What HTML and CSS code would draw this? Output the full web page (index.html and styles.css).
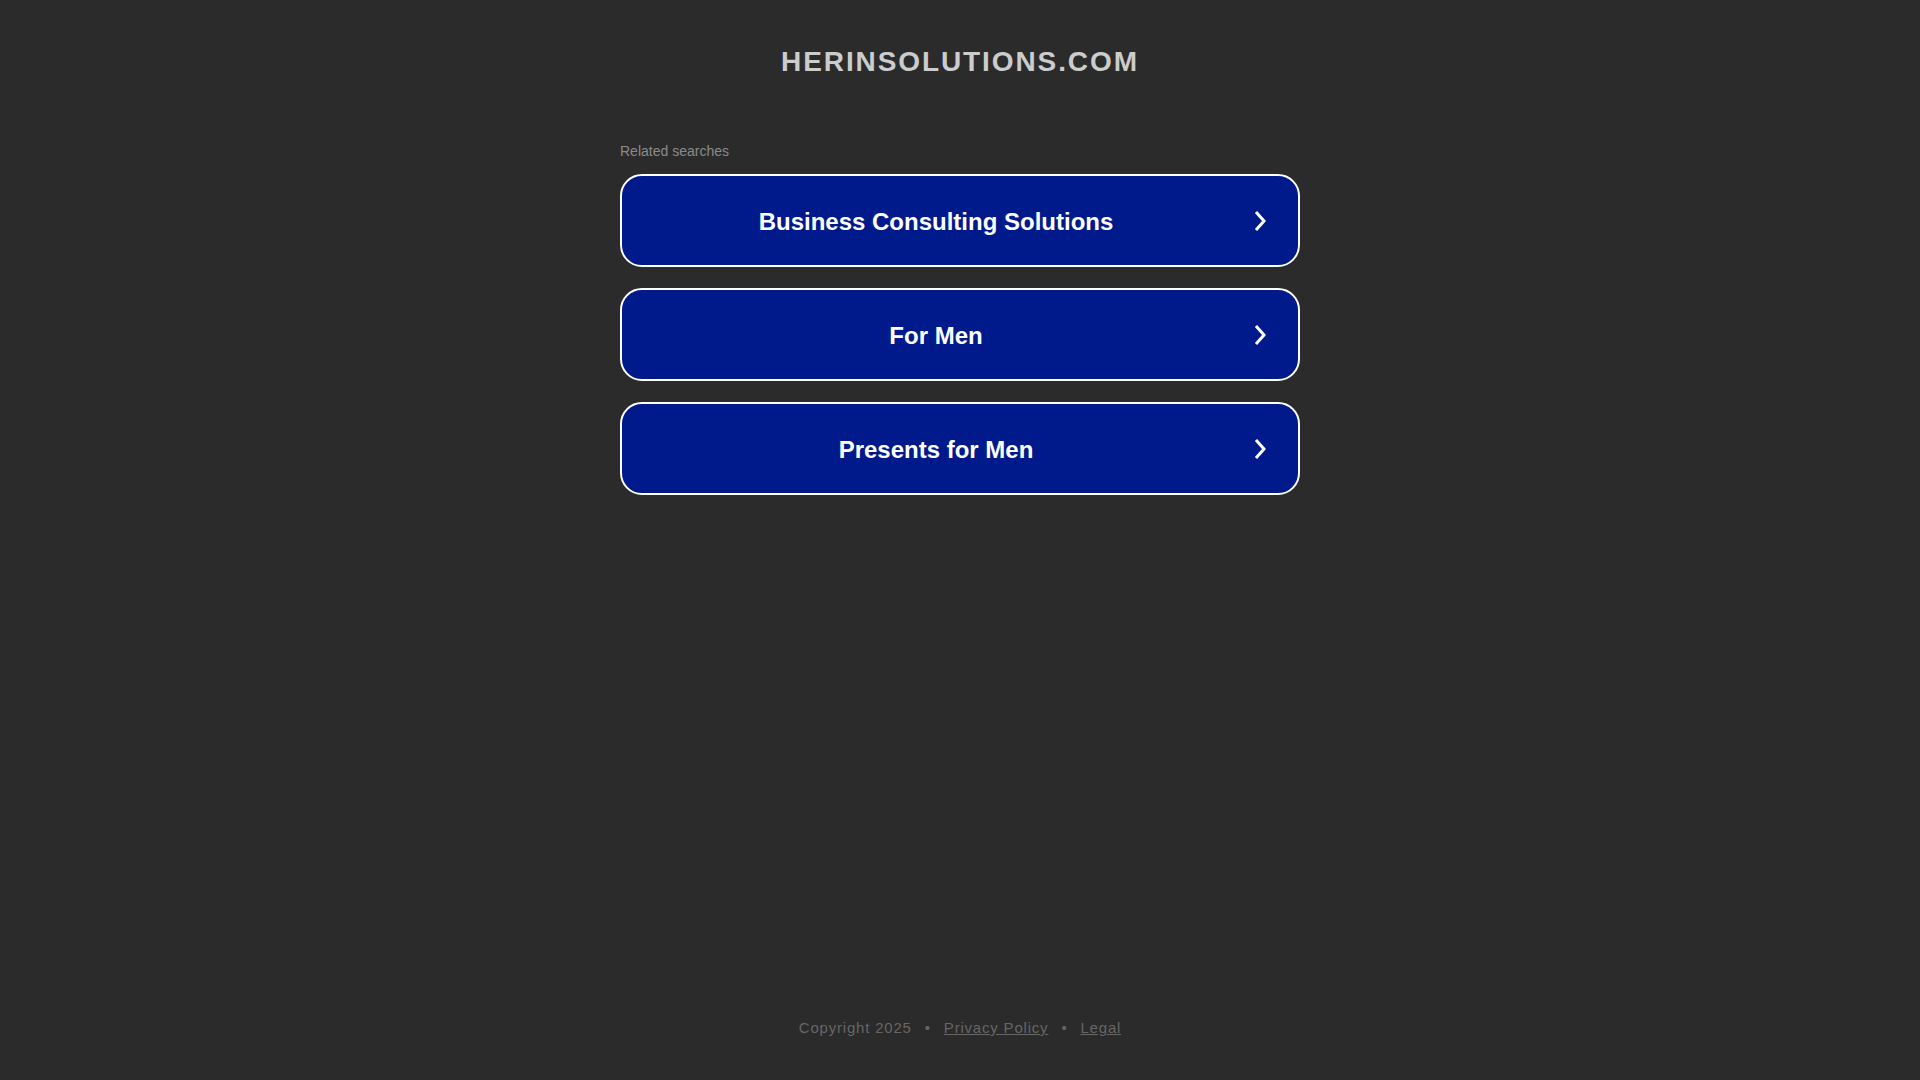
FILE: index.html
```html
<!DOCTYPE html>
<html lang="en">
<head>
<meta charset="utf-8">
<title>herinsolutions.com</title>
<link rel="stylesheet" href="styles.css">
</head>
<body>
<div class="page">
  <header class="header">
    <h1 class="domain">herinsolutions.com</h1>
  </header>
  <main class="content">
    <p class="related-title">Related searches</p>
    <ul class="ads">
      <li><a class="ad" href="#"><span class="ad-text">Business Consulting Solutions</span><svg class="chevron" viewBox="0 0 12 22" width="12" height="22"><polyline points="2,2 10,11 2,20" fill="none" stroke="#fff" stroke-width="3"/></svg></a></li>
      <li><a class="ad" href="#"><span class="ad-text">For Men</span><svg class="chevron" viewBox="0 0 12 22" width="12" height="22"><polyline points="2,2 10,11 2,20" fill="none" stroke="#fff" stroke-width="3"/></svg></a></li>
      <li><a class="ad" href="#"><span class="ad-text">Presents for Men</span><svg class="chevron" viewBox="0 0 12 22" width="12" height="22"><polyline points="2,2 10,11 2,20" fill="none" stroke="#fff" stroke-width="3"/></svg></a></li>
    </ul>
  </main>
  <footer class="footer">
    <span class="copy">Copyright 2025</span><span class="sep">•</span><a class="flink" href="#">Privacy Policy</a><span class="sep">•</span><a class="flink" href="#">Legal</a>
  </footer>
</div>
</body>
</html>
```
FILE: styles.css
```css
html, body {
  margin: 0;
  padding: 0;
  background: #2b2b2b;
  font-family: "Liberation Sans", Arial, sans-serif;
}

.page {
  min-height: 100vh;
  display: flex;
  flex-direction: column;
  box-sizing: border-box;
}

.header {
  padding-top: 46px;
  text-align: center;
}

.domain {
  margin: 0;
  font-size: 28px;
  line-height: 32px;
  font-weight: bold;
  letter-spacing: 1.9px;
  text-transform: uppercase;
  color: #cccccc;
}

.content {
  width: 680px;
  margin: 65px auto 0;
}

.related-title {
  margin: 0 0 15px;
  font-size: 14px;
  line-height: 16px;
  color: #8a8a8a;
}

.ads {
  list-style: none;
  margin: 0;
  padding: 0;
  display: flex;
  flex-direction: column;
  gap: 21px;
}

.ad {
  box-sizing: border-box;
  height: 93px;
  display: flex;
  align-items: center;
  gap: 24px;
  padding: 3px 32px 0 20px;
  background: #011a8b;
  border: 2px solid #ffffff;
  border-radius: 22px;
  text-decoration: none;
  color: #ffffff;
}

.ad-text {
  flex: 1;
  text-align: center;
  font-size: 24px;
  font-weight: bold;
  line-height: 28px;
}

.chevron {
  display: block;
  flex: none;
  margin-top: -3px;
}

.footer {
  margin-top: auto;
  padding-bottom: 44px;
  display: flex;
  justify-content: center;
  font-size: 15px;
  line-height: 17px;
  letter-spacing: 0.8px;
  color: #666666;
}

.sep {
  padding: 0 13px;
}

.flink {
  color: #666666;
  text-decoration: underline;
}
```
